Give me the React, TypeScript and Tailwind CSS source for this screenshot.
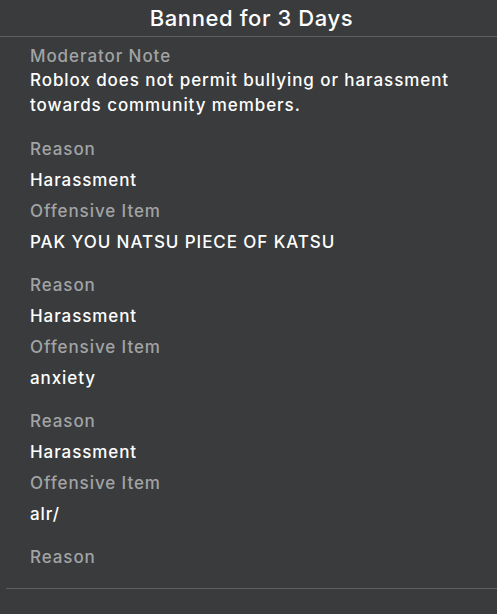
const entries = [
  { reason: "Harassment", item: "PAK YOU NATSU PIECE OF KATSU" },
  { reason: "Harassment", item: "anxiety" },
  { reason: "Harassment", item: "alr/" },
];

function Field({ label, value }: { label: string; value: string }) {
  return (
    <>
      <div className="h-[31px] leading-[31px] text-[#a2a3a4]">{label}</div>
      <div className="h-[31px] leading-[31px] text-white">{value}</div>
    </>
  );
}

export default function App() {
  return (
    <div
      className="w-[497px] h-[614px] bg-[#393b3d] flex flex-col overflow-hidden"
      style={{ fontFamily: "Inter, 'Open Sans', sans-serif" }}
    >
      {/* Title bar */}
      <div className="h-[37px] shrink-0 flex items-center justify-center pl-[6px] border-b border-[#5d5e60]">
        <h1 className="text-[22px] font-medium text-white tracking-[0.6px]">Banned for 3 Days</h1>
      </div>

      {/* Scrollable ban details */}
      <div className="h-[551px] shrink-0 overflow-hidden pl-[30px] pr-4 pt-[8px] text-[17px] font-medium tracking-[0.92px]">
        <div className="leading-[23px] text-[#a2a3a4]">Moderator Note</div>
        <div className="leading-[25px] text-white">
          Roblox does not permit bullying or harassment towards community members.
        </div>
        <div className="mt-[16px] flex flex-col gap-[12px]">
          {entries.map((e, i) => (
            <div key={i}>
              <Field label="Reason" value={e.reason} />
              <Field label="Offensive Item" value={e.item} />
            </div>
          ))}
          <div className="h-[31px] leading-[31px] text-[#a2a3a4]">Reason</div>
        </div>
      </div>

      <div className="ml-[6px] border-t border-[#5d5e60]" />
    </div>
  );
}
